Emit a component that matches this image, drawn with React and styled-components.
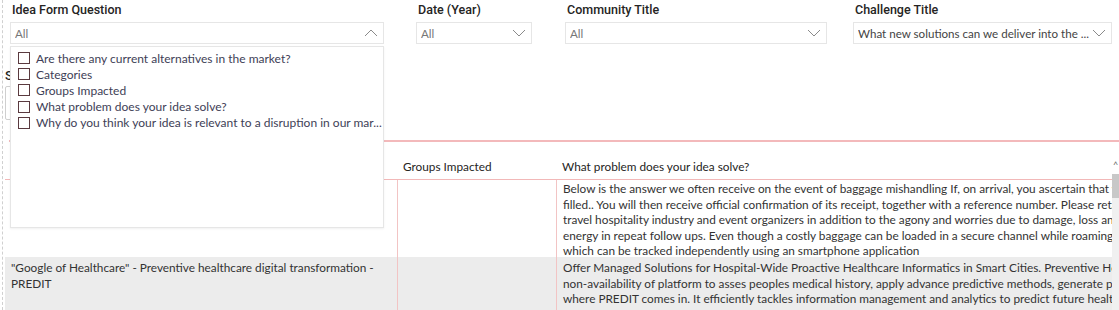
import React from 'react';
import styled, { createGlobalStyle } from 'styled-components';

const GlobalStyle = createGlobalStyle`
  html, body {
    margin: 0;
    padding: 0;
    background: #ffffff;
  }
  body {
    font-family: Lato, "Liberation Sans", Arial, sans-serif;
    color: #252423;
  }
`;

const Page = styled.div`
  position: relative;
  width: 1119px;
  height: 310px;
  overflow: hidden;
  background: #fff;
`;

const Canvas = styled.div`
  margin-left: 2px;
  height: 310px;
  border-left: 1px dashed #d0d0d0;
  display: flex;
  flex-direction: column;
`;

const FilterRow = styled.div`
  display: flex;
  padding-top: 2px;
  height: 46px;
`;

const Slicer = styled.div`
  width: ${(p) => p.width}px;
  margin-left: ${(p) => p.offset}px;
  display: flex;
  flex-direction: column;
  position: relative;
`;

const SlicerTitle = styled.div`
  font-family: Roboto, "Liberation Sans", sans-serif;
  font-weight: 500;
  font-size: 12.5px;
  line-height: 16px;
  height: 20px;
  padding-left: 2px;
  color: #252423;
`;

const SlicerBox = styled.div`
  height: 22px;
  box-sizing: border-box;
  border: 1px solid #e6e6e6;
  display: flex;
  align-items: center;
  padding: 0 5px 0 4px;
  font-size: 11.6px;
  color: ${(p) => (p.filled ? '#444' : '#777')};
  background: #fff;
`;

const BoxText = styled.span`
  flex: 1;
  white-space: nowrap;
  overflow: hidden;
  text-overflow: clip;
`;

const Chevron = ({ up }) => (
  <svg width="14" height="8" viewBox="0 0 14 8" style={{ flexShrink: 0, marginLeft: 3 }}>
    <path
      d={up ? 'M1 7 L7 1 L13 7' : 'M1 1 L7 7 L13 1'}
      fill="none"
      stroke="#8a8a8a"
      strokeWidth="1"
    />
  </svg>
);

const HiddenRow = styled.div`
  height: 92px;
  display: flex;
  flex-direction: column;
  padding-left: 2px;
`;

const HiddenTitle = styled.div`
  font-family: Roboto, "Liberation Sans", sans-serif;
  font-weight: 500;
  font-size: 13px;
  margin-top: 20px;
  height: 18px;
`;

const HiddenBox = styled.div`
  width: 200px;
  height: 32px;
  border: 1px solid #cfcfcf;
  border-radius: 2px;
`;

const PinkRule = styled.div`
  height: 2px;
  margin-left: 6px;
  background: #f3b9bb;
`;

const Table = styled.div`
  flex: 1;
  display: flex;
  margin-left: 2px;
  min-height: 0;
`;

const Grid = styled.div`
  flex: 1;
  overflow: hidden;
  display: grid;
  grid-template-columns: 392px 159px 620px;
  grid-auto-rows: min-content;
  align-content: start;
  font-size: 11.8px;
  line-height: 15.5px;
  color: #333;
`;

const HeadCell = styled.div`
  height: 38px;
  box-sizing: border-box;
  padding: 17px 6px 0;
  border-bottom: 1px solid #f2b8b8;
  white-space: nowrap;
  color: #252423;
`;

const Cell = styled.div`
  height: ${(p) => p.h}px;
  box-sizing: border-box;
  padding: ${(p) => p.pad}px 6px 0;
  background: ${(p) => (p.shade ? '#ececec' : '#fff')};
  border-left: ${(p) => (p.first ? 'none' : '1px solid #f2c4c4')};
  overflow: hidden;
`;

const Line = styled.div`
  white-space: nowrap;
`;

const Scrollbar = styled.div`
  width: 7px;
  margin-top: 14px;
  background: #f0f0f0;
  display: flex;
  flex-direction: column;
  align-items: center;
`;

const ScrollArrow = styled.div`
  height: 18px;
  width: 7px;
  background: #fff;
  font-size: 9px;
  color: #666;
  text-align: center;
  line-height: 18px;
`;

const Thumb = styled.div`
  width: 7px;
  height: 24px;
  background: #c8c8c8;
`;

const Dropdown = styled.div`
  position: absolute;
  left: 0;
  top: 44px;
  width: 374px;
  height: 182px;
  background: #fff;
  border: 1px solid #e6e6e6;
  box-shadow: 0 1px 2px rgba(0, 0, 0, 0.06);
  padding-top: 3px;
  box-sizing: border-box;
  z-index: 5;
`;

const Option = styled.div`
  display: flex;
  align-items: center;
  height: 16.2px;
  padding-left: 7px;
  font-size: 12px;
  color: #3e3e56;
  white-space: nowrap;
`;

const Check = styled.span`
  width: 10px;
  height: 10px;
  border: 1px solid #5a3a3f;
  margin-right: 6px;
  flex-shrink: 0;
`;

const options = [
  'Are there any current alternatives in the market?',
  'Categories',
  'Groups Impacted',
  'What problem does your idea solve?',
  'Why do you think your idea is relevant to a disruption in our mar...',
];

const rows = [
  {
    h: 77,
    pad: 1,
    title: ['Baggage Tracker - smart tracking of luggage for travellers and airlines'],
    text: [
      'Below is the answer we often receive on the event of baggage mishandling If, on arrival, you ascertain that your baggage',
      'filled.. You will then receive official confirmation of its receipt, together with a reference number. Please retain this',
      'travel hospitality industry and event organizers in addition to the agony and worries due to damage, loss and delay',
      'energy in repeat follow ups. Even though a costly baggage can be loaded in a secure channel while roaming across',
      'which can be tracked independently using an smartphone application',
    ],
  },
  {
    h: 80,
    pad: 3,
    shade: true,
    title: ['"Google of Healthcare" - Preventive healthcare digital transformation -', 'PREDIT'],
    text: [
      'Offer Managed Solutions for Hospital-Wide Proactive Healthcare Informatics in Smart Cities. Preventive Healthcare',
      'non-availability of platform to asses peoples medical history, apply advance predictive methods, generate proper',
      'where PREDIT comes in. It efficiently tackles information management and analytics to predict future health risks',
      'd a life data for proactive healthcare PREDIT will extract instantly the medical information system, plus track',
    ],
  },
];

const App = () => (
  <Page>
    <GlobalStyle />
    <Canvas>
      <FilterRow>
        <Slicer width={374} offset={7}>
          <SlicerTitle>Idea Form Question</SlicerTitle>
          <SlicerBox>
            <BoxText>All</BoxText>
            <Chevron up />
          </SlicerBox>
          <Dropdown>
            {options.map((o) => (
              <Option key={o}>
                <Check />
                {o}
              </Option>
            ))}
          </Dropdown>
        </Slicer>
        <Slicer width={116} offset={32}>
          <SlicerTitle>Date (Year)</SlicerTitle>
          <SlicerBox>
            <BoxText>All</BoxText>
            <Chevron />
          </SlicerBox>
        </Slicer>
        <Slicer width={262} offset={33}>
          <SlicerTitle>Community Title</SlicerTitle>
          <SlicerBox>
            <BoxText>All</BoxText>
            <Chevron />
          </SlicerBox>
        </Slicer>
        <Slicer width={259} offset={26}>
          <SlicerTitle>Challenge Title</SlicerTitle>
          <SlicerBox filled>
            <BoxText>What new solutions can we deliver into the ...</BoxText>
            <Chevron />
          </SlicerBox>
        </Slicer>
      </FilterRow>
      <HiddenRow>
        <HiddenTitle>Status</HiddenTitle>
        <HiddenBox />
      </HiddenRow>
      <PinkRule />
      <Table>
        <Grid>
          <HeadCell>Idea Title</HeadCell>
          <HeadCell>Groups Impacted</HeadCell>
          <HeadCell>What problem does your idea solve?</HeadCell>
          {rows.map((r, i) => (
            <React.Fragment key={i}>
              <Cell h={r.h} pad={r.pad} shade={r.shade} first>
                {r.title.map((t) => (
                  <Line key={t}>{t}</Line>
                ))}
              </Cell>
              <Cell h={r.h} pad={r.pad} shade={r.shade} />
              <Cell h={r.h} pad={r.pad} shade={r.shade}>
                {r.text.map((t) => (
                  <Line key={t}>{t}</Line>
                ))}
              </Cell>
            </React.Fragment>
          ))}
        </Grid>
        <Scrollbar>
          <ScrollArrow>^</ScrollArrow>
          <Thumb />
        </Scrollbar>
      </Table>
    </Canvas>
  </Page>
);

export default App;
